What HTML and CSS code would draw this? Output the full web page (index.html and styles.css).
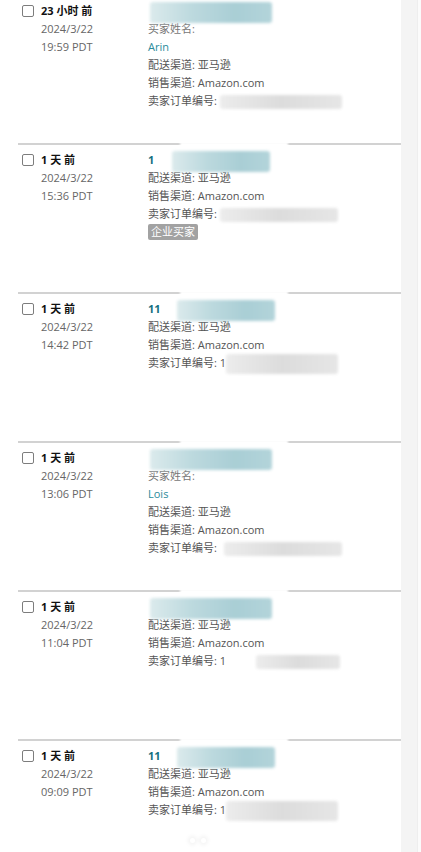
FILE: index.html
```html
<!DOCTYPE html>
<html lang="zh-CN">

<head>
    <meta charset="UTF-8">
    <meta name="viewport" content="width=device-width, initial-scale=1.0">
    <title>订单列表</title>
    <link rel="stylesheet" href="styles.css">
</head>

<body>
    <div class="page">
        <div class="main">
            <div class="order-list">
                <div class="order">
                    <div class="check-col"><span class="checkbox"></span></div>
                    <div class="time-col">
                        <div class="ago">23 小时 前</div>
                        <div>2024/3/22</div>
                        <div>19:59 PDT</div>
                    </div>
                    <div class="info-col">
                        <div class="order-no"><span class="mask teal w-full"></span></div>
                        <div class="smudge">买家姓名:</div>
                        <div class="buyer">Arin</div>
                        <div>配送渠道: 亚马逊</div>
                        <div>销售渠道: Amazon.com</div>
                        <div>卖家订单编号: <span class="mask gray w-122"></span></div>
                    </div>
                </div>

                <div class="order">
                    <div class="check-col"><span class="checkbox"></span></div>
                    <div class="time-col">
                        <div class="ago">1 天 前</div>
                        <div>2024/3/22</div>
                        <div>15:36 PDT</div>
                    </div>
                    <div class="info-col">
                        <div class="order-no">1<span class="mask teal w-98 gap-18"></span></div>
                        <div>配送渠道: 亚马逊</div>
                        <div>销售渠道: Amazon.com</div>
                        <div>卖家订单编号: <span class="mask gray w-118"></span></div>
                        <div><span class="badge">企业买家</span></div>
                    </div>
                </div>

                <div class="order">
                    <div class="check-col"><span class="checkbox"></span></div>
                    <div class="time-col">
                        <div class="ago">1 天 前</div>
                        <div>2024/3/22</div>
                        <div>14:42 PDT</div>
                    </div>
                    <div class="info-col">
                        <div class="order-no">11<span class="mask teal w-98 gap-16"></span></div>
                        <div>配送渠道: 亚马逊</div>
                        <div>销售渠道: Amazon.com</div>
                        <div>卖家订单编号: 1<span class="mask gray w-112 tall"></span></div>
                    </div>
                </div>

                <div class="order">
                    <div class="check-col"><span class="checkbox"></span></div>
                    <div class="time-col">
                        <div class="ago">1 天 前</div>
                        <div>2024/3/22</div>
                        <div>13:06 PDT</div>
                    </div>
                    <div class="info-col">
                        <div class="order-no"><span class="mask teal w-full"></span></div>
                        <div class="smudge">买家姓名:</div>
                        <div class="buyer">Lois</div>
                        <div>配送渠道: 亚马逊</div>
                        <div>销售渠道: Amazon.com</div>
                        <div>卖家订单编号: <span class="mask gray w-118 gap-4"></span></div>
                    </div>
                </div>

                <div class="order">
                    <div class="check-col"><span class="checkbox"></span></div>
                    <div class="time-col">
                        <div class="ago">1 天 前</div>
                        <div>2024/3/22</div>
                        <div>11:04 PDT</div>
                    </div>
                    <div class="info-col">
                        <div class="order-no"><span class="mask teal w-full"></span></div>
                        <div>配送渠道: 亚马逊</div>
                        <div>销售渠道: Amazon.com</div>
                        <div>卖家订单编号: 1<span class="mask gray w-84 gap-30"></span></div>
                    </div>
                </div>

                <div class="order">
                    <div class="check-col"><span class="checkbox"></span></div>
                    <div class="time-col">
                        <div class="ago">1 天 前</div>
                        <div>2024/3/22</div>
                        <div>09:09 PDT</div>
                    </div>
                    <div class="info-col">
                        <div class="order-no">11<span class="mask teal w-98 gap-16"></span></div>
                        <div>配送渠道: 亚马逊</div>
                        <div>销售渠道: Amazon.com</div>
                        <div>卖家订单编号: 1<span class="mask gray w-112 tall"></span></div>
                    </div>
                </div>
            </div>

            <div class="loader">
                <span class="dot"></span>
                <span class="dot"></span>
            </div>
        </div>
        <div class="scroll-strip"></div>
        <div class="scroll-edge"></div>
    </div>
</body>

</html>
```

FILE: styles.css
```css
body {
    margin: 0;
    padding: 0;
    background: #fff;
    color: #555;
    font-family: "Open Sans", "Noto Sans CJK SC", sans-serif;
    font-size: 11px;
}

.page {
    display: flex;
    height: 852px;
    overflow: hidden;
}

.main {
    flex: 1;
    padding-left: 18px;
}

.scroll-strip {
    width: 16px;
    background: #f4f4f4;
}

.scroll-edge {
    width: 3px;
    background: #fbfbfb;
    border-left: 1px solid #eeeeee;
}

.order-list {
    margin-top: -4px;
}

.order {
    position: relative;
    display: grid;
    grid-template-columns: 23px 107px 1fr;
    height: 141px;
    padding-top: 6px;
    border-bottom: 2px solid #d2d2d2;
    line-height: 18px;
}

/* blur smear over the divider above */
.order + .order::before {
    content: "";
    position: absolute;
    top: -3px;
    left: 162px;
    width: 108px;
    height: 5px;
    background: #fff;
    filter: blur(1px);
}

.order:last-child {
    height: auto;
    border-bottom: none;
}

.checkbox {
    display: block;
    width: 10px;
    height: 10px;
    margin: 3px 0 0 4px;
    border: 1px solid #7d7d7d;
    border-radius: 2px;
    background: #fff;
}

.time-col {
    color: #666;
}

.time-col .ago {
    color: #111;
    font-weight: bold;
}

.info-col {
    color: #555;
}

.order-no {
    color: #146f80;
    font-weight: bold;
    height: 18px;
}

.buyer {
    color: #2a8b9b;
}

.smudge {
    color: #777;
}

.mask {
    display: inline-block;
    vertical-align: middle;
    height: 14px;
    border-radius: 3px;
    filter: blur(1.5px);
}

.mask.teal {
    height: 21px;
    background: linear-gradient(90deg, #dbeaec, #bcd9de 35%, #a9ced5 70%, #b3d4da);
}

.mask.gray {
    background: linear-gradient(90deg, #ececec, #dcdcdc 50%, #e6e6e6);
}

.mask.tall {
    height: 20px;
}

.w-full {
    width: 122px;
    margin-left: 2px;
}

.w-122 { width: 122px; }
.w-118 { width: 118px; }
.w-112 { width: 112px; }
.w-98 { width: 98px; }
.w-84 { width: 84px; }

.gap-4 { margin-left: 4px; }
.gap-16 { margin-left: 16px; }
.gap-18 { margin-left: 18px; }
.gap-30 { margin-left: 30px; }

.badge {
    display: inline-block;
    padding: 0 3px;
    line-height: 16px;
    margin-top: 1px;
    background: #a2a2a2;
    color: #fff;
    border-radius: 2px;
}

.loader {
    display: flex;
    justify-content: center;
    gap: 6px;
    padding-top: 17px;
    padding-right: 23px;
}

.dot {
    width: 5px;
    height: 5px;
    border-radius: 50%;
    background: #fff;
    box-shadow: 0 0 4px 2px rgba(0, 0, 0, 0.05);
}
```
